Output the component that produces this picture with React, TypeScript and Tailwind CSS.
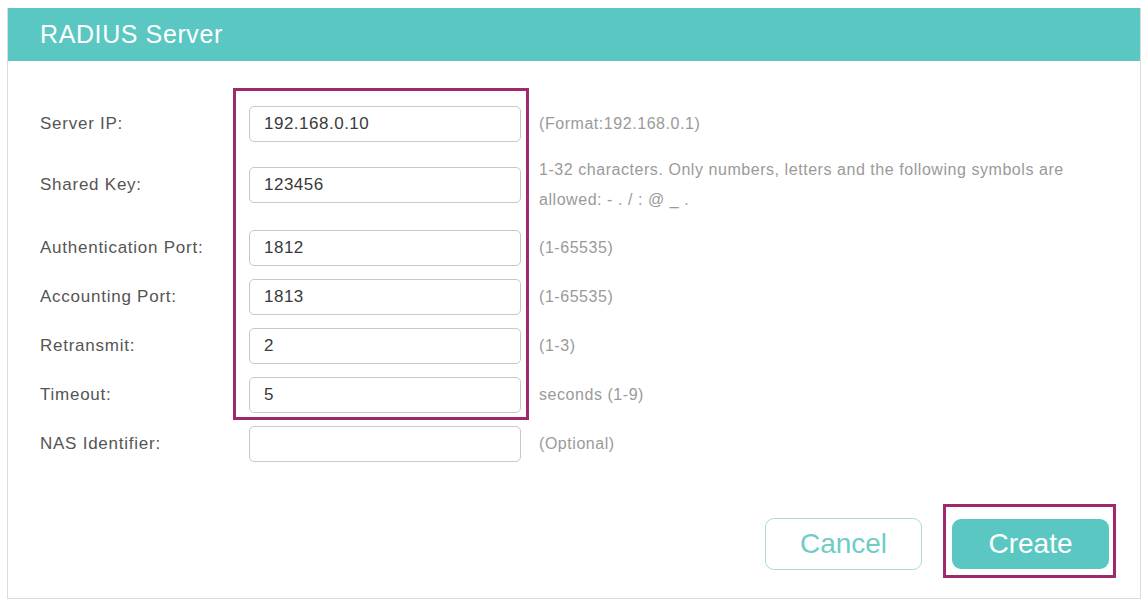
import React from 'react';

const rows = [
  { label: 'Server IP:', value: '192.168.0.10', hint: '(Format:192.168.0.1)', mt: 'mt-[45px]' },
  {
    label: 'Shared Key:',
    value: '123456',
    hint: '1-32 characters. Only numbers, letters and the following symbols are allowed: - . / : @ _ .',
    mt: 'mt-[25px]',
  },
  { label: 'Authentication Port:', value: '1812', hint: '(1-65535)', mt: 'mt-[27px]' },
  { label: 'Accounting Port:', value: '1813', hint: '(1-65535)', mt: 'mt-[13px]' },
  { label: 'Retransmit:', value: '2', hint: '(1-3)', mt: 'mt-[13px]' },
  { label: 'Timeout:', value: '5', hint: 'seconds (1-9)', mt: 'mt-[13px]' },
  { label: 'NAS Identifier:', value: '', hint: '(Optional)', mt: 'mt-[13px]' },
];

const FormRow = ({ label, value, hint, mt }: { label: string; value: string; hint: string; mt: string }) => (
  <div className={`flex items-center h-[36px] ${mt}`}>
    <div className="w-[241px] pl-[32px] text-[17px] tracking-[0.75px] text-[#555]">{label}</div>
    <div className="w-[272px] h-[36px] shrink-0 rounded-[5px] border border-[#c8c8c8] bg-white px-[14px] flex items-center text-[17px] tracking-[0.5px] text-[#3a3a3a]">
      {value}
    </div>
    <div className="ml-[18px] w-[545px] text-[16px] leading-[30px] tracking-[0.55px] text-[#9a9a9a]">{hint}</div>
  </div>
);

export default function App() {
  return (
    <div className="w-[1148px] h-[601px] bg-white pt-[8px] pl-[7px]" style={{ fontFamily: '"Liberation Sans", Arial, sans-serif' }}>
      <div className="relative w-[1134px] h-[591px] border border-t-0 border-[#dcdcdc] bg-white">
        <div className="h-[53px] bg-[#5bc7c3] pl-[32px] flex items-center">
          <span className="text-[25px] tracking-[0.6px] text-white">RADIUS Server</span>
        </div>

        {rows.map((r) => (
          <FormRow key={r.label} {...r} />
        ))}

        <div className="mt-[56px] pr-[31px] flex justify-end gap-[30px]">
          <button className="w-[157px] h-[52px] rounded-[9px] border-[1.5px] border-[#a8dcd8] bg-white text-[28px] text-[#70ccc6]">
            Cancel
          </button>
          <button className="w-[157px] h-[50px] mt-[1px] rounded-[9px] bg-[#5bc7c3] text-[28px] text-white">
            Create
          </button>
        </div>

        {/* highlight annotations */}
        <div className="absolute left-[225px] top-[80px] w-[296px] h-[332px] border-[3px] border-[#9e2a6b]" />
        <div className="absolute left-[935px] top-[496px] w-[173px] h-[74px] border-[3px] border-[#9e2a6b]" />
      </div>
    </div>
  );
}
